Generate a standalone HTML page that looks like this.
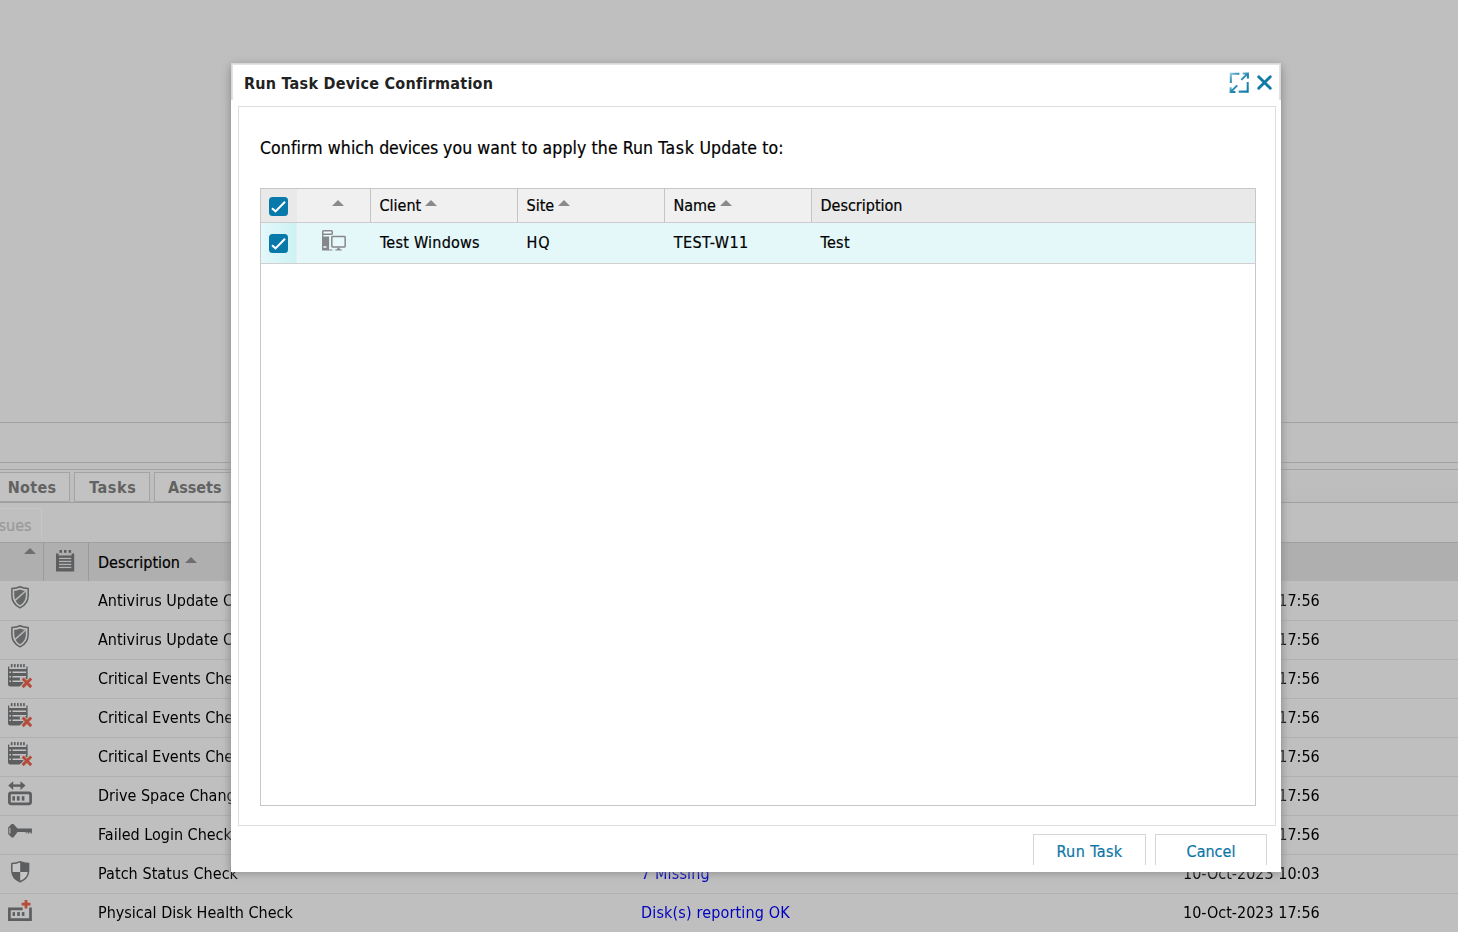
<!DOCTYPE html>
<html>
<head>
<meta charset="utf-8">
<title>Run Task Device Confirmation</title>
<style>
html,body{margin:0;padding:0;}
body{width:1458px;height:932px;overflow:hidden;position:relative;background:#bfbfbf;
 font-family:"DejaVu Sans Condensed","DejaVu Sans","Liberation Sans",sans-serif;font-stretch:condensed;font-size:16px;color:#000;-webkit-text-stroke:0.2px;}
.abs{position:absolute;}
.hl{position:absolute;left:0;width:1458px;height:1px;background:#a3a3a3;}
/* background page */
.tab{-webkit-text-stroke:0;position:absolute;top:472px;height:30px;box-sizing:border-box;border:1px solid #a3a3a3;
 color:#626262;font-weight:bold;font-size:16px;line-height:29px;white-space:nowrap;background:#c2c2c2;}
.bgrow{-webkit-text-stroke:0;will-change:transform;position:absolute;left:0;width:1458px;height:39px;box-sizing:border-box;border-bottom:1px solid #b0b0b0;}
.bgrow span{position:absolute;top:0;line-height:38px;white-space:nowrap;}
.bgrow .d{left:98px;}
.bgrow .s{left:641px;color:#0000bf;letter-spacing:0.15px;}
.bgrow .t{left:1183px;}
.ic{position:absolute;overflow:visible;}
/* dialog */
#shadow{position:absolute;left:231px;top:66px;width:1050px;height:806px;box-shadow:0 0 9px #848484;}
#dlg{position:absolute;left:231px;top:63px;width:1050px;height:809px;background:#fff;box-sizing:border-box;overflow:hidden;}
#dlgborder{position:absolute;left:0;top:0;right:0;height:37px;border:1px solid #d8d8d8;border-bottom:none;box-sizing:border-box;}
#dlgborder:after{content:'';position:absolute;left:0;top:0;right:0;bottom:0;border:1px solid #e3e3e3;border-bottom:none;}
#title{-webkit-text-stroke:0;position:absolute;left:13px;top:9.700px;font-weight:bold;font-size:16px;line-height:22px;white-space:nowrap;color:#222;letter-spacing:0.25px;}
#panel{position:absolute;left:7px;top:43px;width:1038px;height:720px;border:1px solid #e0dcdc;box-sizing:border-box;}
#msg{position:absolute;left:29px;top:72.700px;font-size:17.5px;line-height:24px;white-space:nowrap;letter-spacing:0.1px;}
#grid{position:absolute;left:29px;top:125px;width:996px;height:618px;border:1px solid #c8c8c8;box-sizing:border-box;}
#ghead{position:absolute;left:0;top:0;width:994px;height:33px;background:#f0f0f0;border-bottom:1px solid #cdcdcd;}
.gh{position:absolute;top:0;height:33px;line-height:33.500px;box-sizing:border-box;border-left:1px solid #c4c4c4;padding-left:8.500px;white-space:nowrap;}
#grow{position:absolute;left:0;top:34px;width:994px;height:40px;background:#e4f8fa;border-bottom:1px solid #d0d0d0;}
.gc{position:absolute;top:0;line-height:39px;white-space:nowrap;}
.cb{position:absolute;width:19px;height:19px;border-radius:3.5px;background:#0779aa;}
.arr{position:absolute;width:0;height:0;border-left:6.300px solid transparent;border-right:6.300px solid transparent;border-bottom:6.900px solid #8a8a8a;}
.sa{display:inline-block;width:0;height:0;border-left:6.300px solid transparent;border-right:6.300px solid transparent;border-bottom:6.900px solid #8a8a8a;margin-left:4px;position:relative;top:-5px;}
.btn{position:absolute;top:771px;height:30.500px;box-sizing:border-box;border:1px solid #d6d6d6;border-bottom:none;color:#0b76a6;text-align:center;line-height:33px;font-size:16px;overflow:hidden;}
</style>
</head>
<body>
<!-- background -->
<div class="hl" style="top:422px"></div>
<div class="hl" style="top:462px"></div>
<div class="hl" style="top:469px"></div>
<div class="abs" style="left:0;top:470px;width:1458px;height:32px;background:linear-gradient(#bfbfbf,#bcbcbc)"></div>
<div class="hl" style="top:502px;background:#a0a0a0"></div>
<div class="tab" style="left:-10px;width:80px;padding-left:16.700px;letter-spacing:0.3px;">Notes</div>
<div class="tab" style="left:74px;width:76px;padding-left:14.200px;letter-spacing:0.6px;">Tasks</div>
<div class="tab" style="left:154px;width:120px;padding-left:13px;">Assets</div>
<div class="abs" style="left:-10px;top:508px;width:52px;height:31px;box-sizing:border-box;border:1px solid #c6c6c6;border-bottom:none;color:#999;line-height:33.500px;padding-left:7.500px;">sues</div>
<div class="abs" id="bghead" style="left:0;top:542px;width:1458px;height:39px;background:#afafaf;border-top:1px solid #a0a0a0;box-sizing:border-box;">
  <div class="abs" style="left:43px;top:0;width:1px;height:38px;background:#9a9a9a"></div>
  <div class="abs" style="left:88px;top:0;width:1px;height:38px;background:#9a9a9a"></div>
  <div class="arr" style="left:24px;top:5px;border-bottom-color:#6e6e6e"></div>
  <svg class="ic" style="left:55.800px;top:7.200px" width="19" height="22" viewBox="0 0 19 22">
   <rect x="3.500" y="0" width="2.500" height="2.800" fill="#5d5e60"/><rect x="8" y="0" width="2.500" height="2.800" fill="#5d5e60"/><rect x="12.600" y="0" width="2.500" height="2.800" fill="#5d5e60"/>
   <path d="M0 3.500 L2.600 3.500 L2.600 5.500 L15.600 5.500 L15.600 3.500 L18.200 3.500 L18.200 21.400 L0 21.400 Z" fill="#5d5e60"/>
   <g fill="#b4b4b4"><rect x="3" y="7.800" width="12.300" height="1.300"/><rect x="3" y="10.800" width="12.300" height="1.300"/><rect x="3" y="13.800" width="12.300" height="1.300"/><rect x="3" y="16.800" width="12.300" height="1.300"/></g>
  </svg>
  <span class="abs" style="left:98px;top:0;line-height:40px;">Description</span>
  <div class="arr" style="left:185px;top:14px;border-bottom-color:#6e6e6e"></div>
</div>
<div class="bgrow" style="top:582px"><span class="d">Antivirus Update Check</span><span class="s"></span><span class="t">10-Oct-2023 17:56</span></div>
<svg class="ic" style="left:10.9px;top:585.9px" width="18.1" height="22.8" viewBox="0 0 20 24" preserveAspectRatio="none">
<path d="M10 0.8 C7 2.2 4 2.6 1 2.6 L1 10 C1 16 4.5 20.5 10 23 C15.5 20.5 19 16 19 10 L19 2.6 C16 2.6 13 2.2 10 0.8 Z" fill="none" stroke="#5d5e60" stroke-width="1.6" stroke-linejoin="round"/>
<path d="M10 3.6 C8 4.6 5.8 5 3.6 5 L3.6 10 C3.6 14.6 6 18 10 20.2 C14 18 16.400 14.6 16.400 10 L16.400 5 C14.2 5 12 4.6 10 3.6 Z" fill="#5d5e60" opacity="0.92"/>
<path d="M4.2 15.400 L16.2 5.2" stroke="#bcbcbc" stroke-width="1.5" fill="none"/>
</svg>
<div class="bgrow" style="top:621px"><span class="d">Antivirus Update Check</span><span class="s"></span><span class="t">10-Oct-2023 17:56</span></div>
<svg class="ic" style="left:10.9px;top:624.9px" width="18.1" height="22.8" viewBox="0 0 20 24" preserveAspectRatio="none">
<path d="M10 0.8 C7 2.2 4 2.6 1 2.6 L1 10 C1 16 4.5 20.5 10 23 C15.5 20.5 19 16 19 10 L19 2.6 C16 2.6 13 2.2 10 0.8 Z" fill="none" stroke="#5d5e60" stroke-width="1.6" stroke-linejoin="round"/>
<path d="M10 3.6 C8 4.6 5.8 5 3.6 5 L3.6 10 C3.6 14.6 6 18 10 20.2 C14 18 16.400 14.6 16.400 10 L16.400 5 C14.2 5 12 4.6 10 3.6 Z" fill="#5d5e60" opacity="0.92"/>
<path d="M4.2 15.400 L16.2 5.2" stroke="#bcbcbc" stroke-width="1.5" fill="none"/>
</svg>
<div class="bgrow" style="top:660px"><span class="d" style="letter-spacing:-0.06px">Critical Events Check</span><span class="s"></span><span class="t">10-Oct-2023 17:56</span></div>
<svg class="ic" style="left:7.9px;top:663.8px" width="26" height="26" viewBox="0 0 26 26">
<rect x="2.8" y="0" width="1.700" height="3.200" rx="0.500" fill="#5d5e60"/><rect x="5.9" y="0" width="1.700" height="3.200" rx="0.500" fill="#5d5e60"/><rect x="9.0" y="0" width="1.700" height="3.200" rx="0.500" fill="#5d5e60"/><rect x="12.1" y="0" width="1.700" height="3.200" rx="0.500" fill="#5d5e60"/><rect x="15.1" y="0" width="1.700" height="3.200" rx="0.500" fill="#5d5e60"/>
<path d="M0 2.5 L1.300 2.5 L1.300 4.9 L18.300 4.9 L18.300 2.5 L19.600 2.5 L19.600 20 Q19.600 22.5 17.100 22.5 L2.5 22.5 Q0 22.5 0 20 Z" fill="#5d5e60"/>
<g fill="#c3c3c3">
<rect x="1.400" y="7.5" width="1.600" height="1.500"/><rect x="4.5" y="7.5" width="13.600" height="1.500"/>
<rect x="1.400" y="12" width="1.600" height="1.500"/><rect x="4.5" y="12" width="13.600" height="1.500"/>
<rect x="1.400" y="16.500" width="1.600" height="1.500"/><rect x="4.5" y="16.500" width="13.600" height="1.500"/>
<rect x="11.900" y="13.500" width="2.500" height="3"/>
</g>
<path d="M13.600 13.500 L25 25 M25 12.6 L12.6 25" stroke="#bfbfbf" stroke-width="4.600" fill="none"/>
<path d="M14.600 14.500 L23.200 23.100 M23.200 14.500 L14.600 23.100" stroke="#b54c3a" stroke-width="2.900" fill="none"/>
</svg>
<div class="bgrow" style="top:699px"><span class="d" style="letter-spacing:-0.06px">Critical Events Check</span><span class="s"></span><span class="t">10-Oct-2023 17:56</span></div>
<svg class="ic" style="left:7.9px;top:702.8px" width="26" height="26" viewBox="0 0 26 26">
<rect x="2.8" y="0" width="1.700" height="3.200" rx="0.500" fill="#5d5e60"/><rect x="5.9" y="0" width="1.700" height="3.200" rx="0.500" fill="#5d5e60"/><rect x="9.0" y="0" width="1.700" height="3.200" rx="0.500" fill="#5d5e60"/><rect x="12.1" y="0" width="1.700" height="3.200" rx="0.500" fill="#5d5e60"/><rect x="15.1" y="0" width="1.700" height="3.200" rx="0.500" fill="#5d5e60"/>
<path d="M0 2.5 L1.300 2.5 L1.300 4.9 L18.300 4.9 L18.300 2.5 L19.600 2.5 L19.600 20 Q19.600 22.5 17.100 22.5 L2.5 22.5 Q0 22.5 0 20 Z" fill="#5d5e60"/>
<g fill="#c3c3c3">
<rect x="1.400" y="7.5" width="1.600" height="1.500"/><rect x="4.5" y="7.5" width="13.600" height="1.500"/>
<rect x="1.400" y="12" width="1.600" height="1.500"/><rect x="4.5" y="12" width="13.600" height="1.500"/>
<rect x="1.400" y="16.500" width="1.600" height="1.500"/><rect x="4.5" y="16.500" width="13.600" height="1.500"/>
<rect x="11.900" y="13.500" width="2.500" height="3"/>
</g>
<path d="M13.600 13.500 L25 25 M25 12.6 L12.6 25" stroke="#bfbfbf" stroke-width="4.600" fill="none"/>
<path d="M14.600 14.500 L23.200 23.100 M23.200 14.500 L14.600 23.100" stroke="#b54c3a" stroke-width="2.900" fill="none"/>
</svg>
<div class="bgrow" style="top:738px"><span class="d" style="letter-spacing:-0.06px">Critical Events Check</span><span class="s"></span><span class="t">10-Oct-2023 17:56</span></div>
<svg class="ic" style="left:7.9px;top:741.8px" width="26" height="26" viewBox="0 0 26 26">
<rect x="2.8" y="0" width="1.700" height="3.200" rx="0.500" fill="#5d5e60"/><rect x="5.9" y="0" width="1.700" height="3.200" rx="0.500" fill="#5d5e60"/><rect x="9.0" y="0" width="1.700" height="3.200" rx="0.500" fill="#5d5e60"/><rect x="12.1" y="0" width="1.700" height="3.200" rx="0.500" fill="#5d5e60"/><rect x="15.1" y="0" width="1.700" height="3.200" rx="0.500" fill="#5d5e60"/>
<path d="M0 2.5 L1.300 2.5 L1.300 4.9 L18.300 4.9 L18.300 2.5 L19.600 2.5 L19.600 20 Q19.600 22.5 17.100 22.5 L2.5 22.5 Q0 22.5 0 20 Z" fill="#5d5e60"/>
<g fill="#c3c3c3">
<rect x="1.400" y="7.5" width="1.600" height="1.500"/><rect x="4.5" y="7.5" width="13.600" height="1.500"/>
<rect x="1.400" y="12" width="1.600" height="1.500"/><rect x="4.5" y="12" width="13.600" height="1.500"/>
<rect x="1.400" y="16.500" width="1.600" height="1.500"/><rect x="4.5" y="16.500" width="13.600" height="1.500"/>
<rect x="11.900" y="13.500" width="2.500" height="3"/>
</g>
<path d="M13.600 13.500 L25 25 M25 12.6 L12.6 25" stroke="#bfbfbf" stroke-width="4.600" fill="none"/>
<path d="M14.600 14.500 L23.200 23.100 M23.200 14.500 L14.600 23.100" stroke="#b54c3a" stroke-width="2.900" fill="none"/>
</svg>
<div class="bgrow" style="top:777px"><span class="d">Drive Space Change Check</span><span class="s"></span><span class="t">10-Oct-2023 17:56</span></div>
<svg class="ic" style="left:8px;top:780.6px" width="25" height="25" viewBox="0 0 25 25">
<path d="M2.5 4.6 L15.200 4.6" stroke="#5d5e60" stroke-width="2.400" fill="none"/>
<path d="M0.2 4.6 L5.2 0.3 L5.2 8.9 Z M17.500 4.6 L12.5 0.3 L12.5 8.9 Z" fill="#5d5e60"/>
<rect x="1.400" y="11.900" width="21.200" height="10.900" rx="1.800" fill="none" stroke="#5d5e60" stroke-width="2.700"/>
<rect x="4.400" y="15.200" width="2.600" height="4.400" fill="#5d5e60"/><rect x="8.900" y="15.200" width="2.700" height="4.400" fill="#5d5e60"/><rect x="13.800" y="15.200" width="2.600" height="4.400" fill="#5d5e60"/>
</svg>
<div class="bgrow" style="top:816px"><span class="d">Failed Login Check</span><span class="s"></span><span class="t">10-Oct-2023 17:56</span></div>
<svg class="ic" style="left:8px;top:824.4px" width="25" height="15" viewBox="0 0 25 15">
<path d="M0.2 3.6 L3.6 0 L5.4 0 L9.6 4.500 L23.900 4.500 L23.900 9.400 L22.600 9.400 L22.600 8.300 L21.200 8.300 L21.200 9.400 L19.800 9.400 L19.800 8.300 L18.400 8.300 L18.400 9.400 L17.600 9.400 L17.600 8 L9.600 8 L5.400 13.600 L3.600 13.600 L0.2 10 Z" fill="#5d5e60"/>
<rect x="1.300" y="4" width="1.100" height="5.600" fill="#b9b9b9"/>
</svg>
<div class="bgrow" style="top:855px"><span class="d" style="letter-spacing:0.07px">Patch Status Check</span><span class="s">7 Missing</span><span class="t">10-Oct-2023 10:03</span></div>
<svg class="ic" style="left:10.9px;top:860.8px" width="20" height="22" viewBox="0 0 20 22">
<path d="M9.2 0.700 C6.600 2 3.700 2.500 0.800 2.600 L0.800 9.500 C0.800 14.800 4.200 18.700 9.200 20.700 C14.200 18.700 17.600 14.800 17.600 9.500 L17.600 2.600 C14.700 2.500 11.800 2 9.200 0.700 Z" fill="#c6c6c6" stroke="#5d5e60" stroke-width="1.500" stroke-linejoin="round"/>
<path d="M9.2 0.700 C11.800 2 14.700 2.500 17.600 2.600 L17.600 9.500 Q17.600 10.200 17.500 10.900 L9.200 10.900 Z" fill="#5d5e60"/>
<path d="M9.200 10.900 L9.200 20.700 C4.600 18.900 1.200 15.400 0.900 10.900 Z" fill="#5d5e60"/>
</svg>
<div class="bgrow" style="top:894px"><span class="d">Physical Disk Health Check</span><span class="s">Disk(s) reporting OK</span><span class="t">10-Oct-2023 17:56</span></div>
<svg class="ic" style="left:8px;top:899.6px" width="25" height="22" viewBox="0 0 25 22">
<path d="M14.600 8.800 L1.400 8.800 L1.400 19.600 L22.500 19.600 L22.500 7.500" fill="none" stroke="#5d5e60" stroke-width="2.700"/>
<rect x="4.600" y="12.100" width="2.400" height="3.800" fill="#5d5e60"/><rect x="9.200" y="12.100" width="2.700" height="3.800" fill="#5d5e60"/><rect x="13.900" y="12.100" width="2.500" height="3.800" fill="#5d5e60"/>
<path d="M18 0 L18 8.400 M13.600 4.200 L22.500 4.200" stroke="#b54c3a" stroke-width="2.800" fill="none"/>
</svg>

<!-- dialog -->
<div id="shadow"></div>
<div id="dlg">
  <div id="dlgborder"></div>
  <div id="title">Run Task Device Confirmation</div>
  <svg class="ic" style="left:998px;top:9px" width="21" height="22" viewBox="0 0 21 22">
<defs><linearGradient id="mg" x1="0" y1="0" x2="1" y2="1"><stop offset="0" stop-color="#8cc4d9"/><stop offset="0.45" stop-color="#2d8db3"/><stop offset="1" stop-color="#0f7aa6"/></linearGradient></defs>
<g fill="none" stroke="url(#mg)" stroke-width="2.050">
<path d="M10.400 1.700 L1.800 1.700 L1.800 11"/>
<path d="M9.700 19.600 L18.700 19.600 L18.700 10"/>
<path d="M12.300 7.900 L18.600 1.600 M13.700 1.400 L18.900 1.400 L18.900 6.600"/>
<path d="M8.200 13.400 L1.800 19.800 M1.600 15.200 L1.600 20 L6.400 20"/>
</g></svg>
<svg class="ic" style="left:1026px;top:12px" width="15" height="15" viewBox="0 0 15 15"><path d="M1.700 1.700 L13.300 13.200 M13.300 1.700 L1.700 13.200" fill="none" stroke="#0f7aa6" stroke-width="2.900" stroke-linecap="round"/></svg>
  <div id="panel"></div>
  <div id="msg">Confirm which <span style="letter-spacing:-0.19px">devices</span> you want to apply the Run <span style="letter-spacing:0.6px">Task</span> Update to:</div>
  <div id="grid">
    <div id="ghead">
      <div class="abs" style="left:0;top:0;width:36px;height:33px;background:#e9e9e9"></div>
      <div class="cb" style="left:8px;top:8px"><svg width="19" height="19" viewBox="0 0 19 19" style="position:absolute;left:0;top:0"><path d="M3 11.300 L6.500 14.400 L16 4.800" fill="none" stroke="#fff" stroke-width="2.100"/></svg></div>
      <div class="arr" style="left:71px;top:11px"></div>
      <div class="gh" style="left:109px;width:147px;">Client<i class="sa"></i></div>
      <div class="gh" style="left:256px;width:147px;">Site<i class="sa"></i></div>
      <div class="gh" style="left:403px;width:147px;">Name<i class="sa"></i></div>
      <div class="gh" style="left:550px;width:444px;background:#e9e9e9">Description</div>
    </div>
    <div id="grow">
      <div class="abs" style="left:0;top:0;width:35px;height:40px;background:linear-gradient(90deg,#e4f8fa 0%,#d9f5f7 45%,#cdf2f4 100%)"></div>
      <div class="abs" style="left:35px;top:0;width:1px;height:40px;background:#ececec"></div>
      <div class="cb" style="left:8px;top:11px"><svg width="19" height="19" viewBox="0 0 19 19" style="position:absolute;left:0;top:0"><path d="M3 11.300 L6.500 14.400 L16 4.800" fill="none" stroke="#fff" stroke-width="2.100"/></svg></div>
      <svg class="ic" style="left:61px;top:7px" width="25" height="21" viewBox="0 0 25 21">
<rect x="0.750" y="0.750" width="9.500" height="3.500" rx="0.800" fill="#f4fcfd" stroke="#86878b" stroke-width="1.500"/>
<rect x="0" y="4" width="1.300" height="3" fill="#86878b"/>
<path d="M0 6.400 L7.100 6.400 L7.100 19.400 L10.400 19.400 L10.400 20.500 L0 20.500 Z" fill="#86878b"/>
<rect x="1.100" y="16.200" width="3.600" height="1.500" rx="0.700" fill="#eefafb"/>
<rect x="9.850" y="6.600" width="13.300" height="10.300" rx="0.600" fill="#e9f9fb" stroke="#86878b" stroke-width="1.500"/>
<path d="M15.700 17.400 L17.400 17.400 L17.900 19.300 L19.800 19.600 L19.800 20.500 L13.300 20.500 L13.300 19.600 L15.200 19.300 Z" fill="#86878b"/>
</svg>
      <span class="gc" style="left:119px;letter-spacing:0.25px">Test Windows</span>
      <span class="gc" style="left:265.600px;letter-spacing:0.9px">HQ</span>
      <span class="gc" style="left:412.700px;letter-spacing:0.45px">TEST-W11</span>
      <span class="gc" style="left:559.600px;letter-spacing:0.3px">Test</span>
    </div>
  </div>
  <div class="btn" style="left:802px;width:113px;letter-spacing:0.4px;">Run Task</div>
  <div class="btn" style="left:924px;width:112px;">Cancel</div>
</div>
</body>
</html>
